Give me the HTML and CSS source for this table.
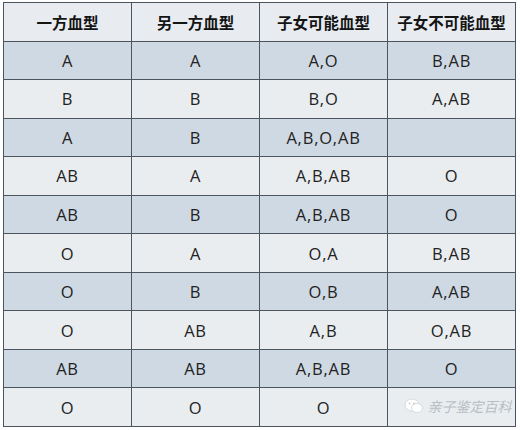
FILE: index.html
```html
<!DOCTYPE html>
<html lang="zh">
<head>
<meta charset="utf-8">
<link rel="stylesheet" href="styles.css">
</head>
<body>
<div class="wrap">
<table class="bt">
  <thead>
    <tr><th>一方血型</th><th>另一方血型</th><th>子女可能血型</th><th>子女不可能血型</th></tr>
  </thead>
  <tbody>
    <tr class="dark"><td>A</td><td>A</td><td>A,O</td><td>B,AB</td></tr>
    <tr class="light"><td>B</td><td>B</td><td>B,O</td><td>A,AB</td></tr>
    <tr class="dark"><td>A</td><td>B</td><td>A,B,O,AB</td><td></td></tr>
    <tr class="light"><td>AB</td><td>A</td><td>A,B,AB</td><td>O</td></tr>
    <tr class="dark"><td>AB</td><td>B</td><td>A,B,AB</td><td>O</td></tr>
    <tr class="light"><td>O</td><td>A</td><td>O,A</td><td>B,AB</td></tr>
    <tr class="dark"><td>O</td><td>B</td><td>O,B</td><td>A,AB</td></tr>
    <tr class="light"><td>O</td><td>AB</td><td>A,B</td><td>O,AB</td></tr>
    <tr class="dark"><td>AB</td><td>AB</td><td>A,B,AB</td><td>O</td></tr>
    <tr class="light"><td>O</td><td>O</td><td>O</td><td class="wm-cell"><span class="wm"><svg class="wm-icon" width="20" height="16" viewBox="0 0 20 16"><ellipse cx="8" cy="7" rx="7" ry="6" fill="#fff" stroke="#d6dbe0" stroke-width="1"/><ellipse cx="13" cy="10" rx="5.5" ry="4.5" fill="#fff" stroke="#d6dbe0" stroke-width="1"/><circle cx="5.5" cy="5.5" r="0.9" fill="#c9ced4"/><circle cx="10" cy="5.5" r="0.9" fill="#c9ced4"/></svg><span class="wm-text">亲子鉴定百科</span></span></td></tr>
  </tbody>
</table>
</div>
</body>
</html>
```

FILE: styles.css
```css
html, body {
  margin: 0;
  padding: 0;
  background: #ffffff;
}
.wrap {
  padding: 2px 4px 0 3px;
}
.bt {
  border-collapse: collapse;
  width: 513px;
  table-layout: fixed;
  font-family: "Open Sans", "Noto Sans CJK SC", sans-serif;
  color: #222222;
}
.bt th, .bt td {
  border: 1.5px solid #4b5560;
  text-align: center;
  vertical-align: middle;
  height: 37.55px;
  padding: 0;
}
.bt th {
  background: #e8ecf0;
  font-family: "Noto Sans CJK SC", sans-serif;
  font-weight: 700;
  font-size: 15.5px;
  color: #141414;
}
.bt td {
  font-size: 16.5px;
  letter-spacing: 0.8px;
}
.dark td {
  background: #cfd9e3;
}
.light td {
  background: #e9edf0;
}
.wm {
  display: inline-flex;
  align-items: center;
  gap: 4px;
  margin-left: 12px;
  letter-spacing: 0;
}
.wm-text {
  font-family: "Noto Sans CJK SC", sans-serif;
  font-size: 14px;
  color: #b8bec5;
  font-style: italic;
}
```
